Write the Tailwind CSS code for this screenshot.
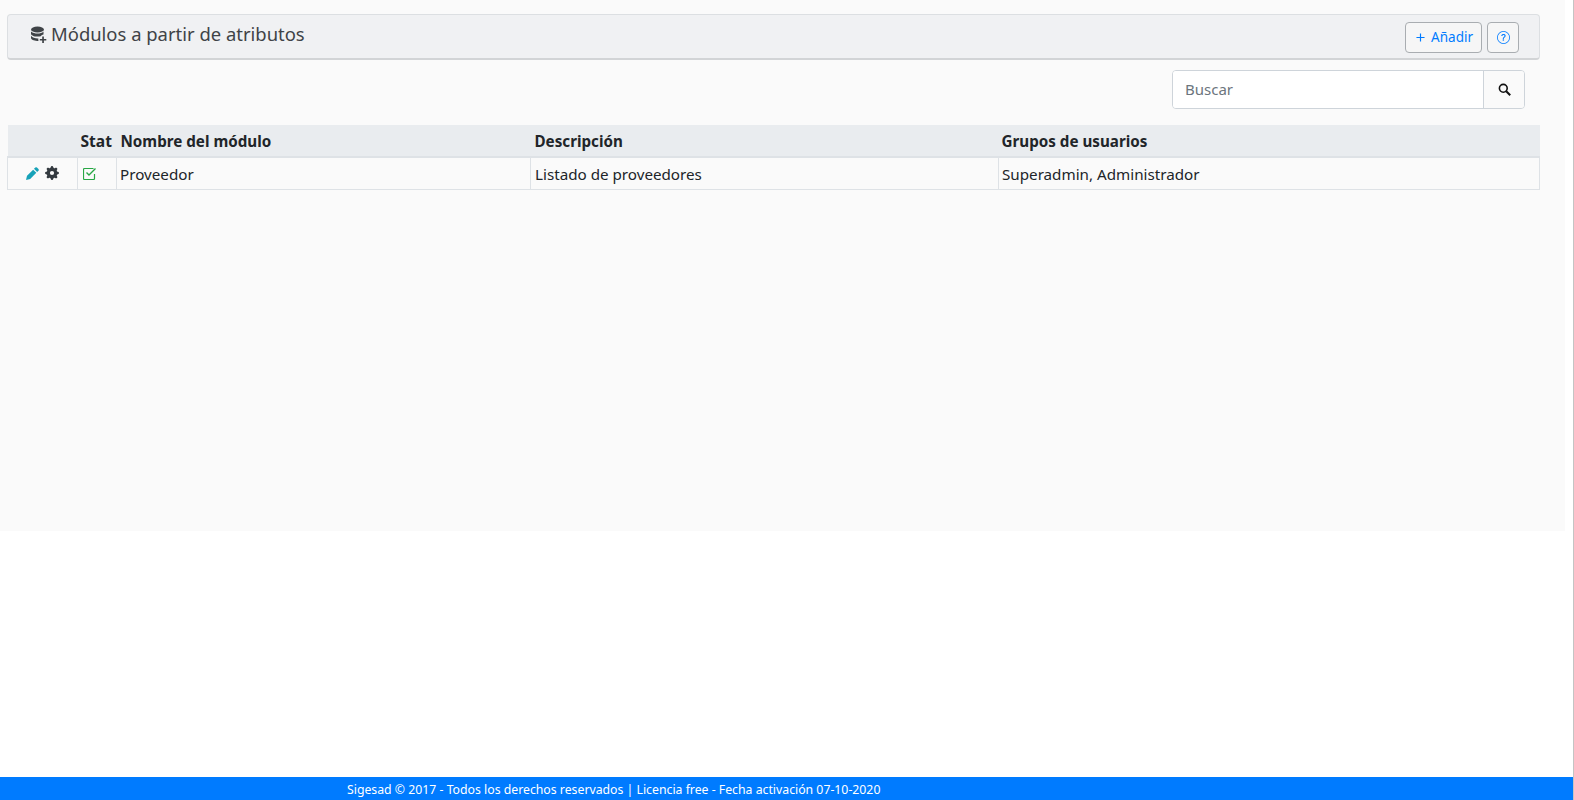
<!DOCTYPE html>
<html lang="es">
<head>
  <meta charset="UTF-8" />
  <title>Módulos a partir de atributos</title>
  <script src="https://cdn.jsdelivr.net/npm/@tailwindcss/browser@4"></script>
</head>
<body class="bg-white font-['Noto_Sans',sans-serif] text-[#212529] overflow-hidden">
  <div class="flex flex-col h-[800px] border-r border-[#c4c4c4]">
    <!-- Contenido -->
    <main class="h-[531px] w-[1565px] bg-[#fafafa] pt-[14px] pl-[7px]">
      <!-- Cabecera -->
      <div class="w-[1533px] h-[46px] flex items-start justify-between bg-[#f0f1f3] border border-[#dcdfe2] border-b-2 border-b-[#d2d4d6] rounded-[4px] pl-[22px] pr-[20px]">
        <h1 class="flex items-center gap-[4px] h-[38px] text-[18.45px] text-[#3f4347]">
          <svg class="w-[17px] h-[17px]" viewBox="0 0 17 17" fill="#3f4347">
            <ellipse cx="7.5" cy="3.5" rx="6.5" ry="3"/>
            <path d="M1 5.500v2.200c0 1.600 2.900 2.900 6.500 2.900 1.200 0 2.300-.15 3.200-.4.7-.9 1.700-1.500 2.800-1.700V5.500c-1.300 1.400-3.600 2.100-6 2.100s-4.700-.7-6.500-2.100z"/>
            <path d="M1 9.800V12c0 1.500 2.700 2.800 6.200 2.900h1.300c-.1-.4-.2-.9-.2-1.300 0-.4 0-.7.1-1.100-3.200.1-5.900-.9-7.400-2.700z"/>
            <path d="M12.200 10.500h1.700v2.400h2.400v1.600h-2.400V17h-1.700v-2.500H9.800v-1.600h2.400z"/>
          </svg>
          Módulos a partir de atributos
        </h1>
        <div class="flex gap-[5px] pt-[7px]">
          <button class="flex items-center gap-[6px] h-[31px] pl-[10px] pr-[8px] bg-[#f6f6f6] border border-[#a9adb1] rounded-[4px] text-[13.5px] text-[#007bff]">
            <svg class="w-[9px] h-[9px]" viewBox="0 0 10 10" stroke="#007bff" stroke-width="1.300" fill="none"><path d="M5 0.500v9M0.500 5h9"/></svg>
            Añadir
          </button>
          <button class="flex items-center justify-center w-[32px] h-[31px] bg-[#f6f6f6] border border-[#a9adb1] rounded-[4px]">
            <svg class="w-[13px] h-[13px]" viewBox="0 0 16 16" fill="#007bff">
              <path d="M8 15A7 7 0 1 1 8 1a7 7 0 0 1 0 14zm0 1A8 8 0 1 0 8 0a8 8 0 0 0 0 16z"/>
              <path d="M5.250 6.030a.240.240 0 0 0 .240.250h.830c.140 0 .250-.110.270-.250.090-.660.540-1.140 1.340-1.140.680 0 1.310.340 1.310 1.170 0 .640-.380.930-.970 1.380-.680.490-1.210 1.060-1.170 1.990v.220c0 .140.110.250.250.250h.810c.140 0 .250-.110.250-.250v-.110c0-.720.270-.930 1.010-1.490.610-.460 1.240-.980 1.240-2.060 0-1.500-1.270-2.230-2.660-2.230-1.260 0-2.640.590-2.750 2.270zm1.550 5.160c0 .530.420.930 1 .930.610 0 1.030-.400 1.030-.930 0-.550-.420-.950-1.030-.950-.580 0-1 .400-1 .950z"/>
            </svg>
          </button>
        </div>
      </div>

      <!-- Buscador -->
      <div class="flex w-[1518px] justify-end mt-[10px]">
        <div class="flex w-[353px] h-[39px] border border-[#ced4da] rounded-[4px] overflow-hidden">
          <input type="text" placeholder="Buscar" class="flex-1 min-w-0 bg-white px-[12px] text-[15px] placeholder:text-[#6c757d]" />
          <button class="flex items-center justify-center w-[41px] bg-[#fafafa] border-l border-[#ced4da]">
            <svg class="w-[13px] h-[13px]" viewBox="0 0 13 13" fill="none" stroke="#111" stroke-width="1.600"><circle cx="5.300" cy="5.300" r="3.900"/><path d="M8.200 8.200l4 4" stroke-width="2"/></svg>
          </button>
        </div>
      </div>

      <!-- Tabla -->
      <table class="w-[1533px] mt-[16px] table-fixed border-collapse text-[15.2px]">
        <thead>
          <tr class="h-[32px] bg-[#e9ecef] border-b-2 border-[#dee2e6] text-left font-bold">
            <th class="w-[70px]"></th>
            <th class="w-[39px] pl-[3px] pt-[2px] font-bold text-[15.6px]">Stat</th>
            <th class="w-[414px] px-[4px] pt-[1px] font-bold">Nombre del módulo</th>
            <th class="w-[468px] px-[4px] pt-[1px] font-bold">Descripción</th>
            <th class="px-[3px] pt-[1px] font-bold">Grupos de usuarios</th>
          </tr>
        </thead>
        <tbody>
          <tr class="h-[32px]">
            <td class="border border-[#dee2e6]">
              <div class="flex items-center justify-center gap-[6px]">
                <svg class="w-[13px] h-[13px]" viewBox="0 0 14 14" fill="#17a2b8"><path d="M10 .6a1.300 1.300 0 0 1 1.800 0l1.600 1.600a1.300 1.300 0 0 1 0 1.800L12 5.400 8.600 2zM7.700 2.900l3.400 3.400-6.600 6.600L0 14l1.100-4.500z"/></svg>
                <svg class="w-[14px] h-[14px]" viewBox="0 0 16 16" fill="#343a40"><path fill-rule="evenodd" d="M9.400 1.100c-.4-1.500-2.400-1.500-2.800 0l-.1.300a1.500 1.500 0 0 1-2.100.9l-.3-.2c-1.300-.8-2.800.7-2 2l.2.300a1.500 1.500 0 0 1-.9 2.100l-.3.100c-1.500.4-1.500 2.400 0 2.800l.3.100a1.500 1.500 0 0 1 .9 2.100l-.2.300c-.8 1.300.7 2.800 2 2l.3-.2a1.500 1.500 0 0 1 2.100.9l.1.300c.4 1.500 2.400 1.500 2.800 0l.1-.3a1.500 1.500 0 0 1 2.100-.9l.3.2c1.300.8 2.800-.7 2-2l-.2-.3a1.500 1.500 0 0 1 .9-2.100l.3-.1c1.500-.4 1.500-2.400 0-2.800l-.3-.1a1.500 1.500 0 0 1-.9-2.100l.2-.3c.8-1.300-.7-2.800-2-2l-.3.2a1.500 1.500 0 0 1-2.100-.9zM8 10.400a2.400 2.400 0 1 1 0-4.800 2.400 2.400 0 0 1 0 4.800z"/></svg>
              </div>
            </td>
            <td class="border border-[#dee2e6] pl-[5px]">
              <svg class="w-[13px] h-[13px]" viewBox="0 0 13 13" fill="none" stroke="#28a745" stroke-width="1.200"><path d="M11.500 7v4.500a1 1 0 0 1-1 1h-9a1 1 0 0 1-1-1v-9a1 1 0 0 1 1-1h9"/><path d="M3.500 5.500L6 8l6.500-6.500" stroke-width="1.400"/></svg>
            </td>
            <td class="border border-[#dee2e6] pl-[3px] pr-[4px] pt-[2px]">Proveedor</td>
            <td class="border border-[#dee2e6] px-[4px] pt-[2px]">Listado de proveedores</td>
            <td class="border border-[#dee2e6] px-[3px] pt-[2px]">Superadmin, Administrador</td>
          </tr>
        </tbody>
      </table>
    </main>

    <div class="flex-1"></div>

    <!-- Pie -->
    <footer class="h-[23px] bg-[#007bff] pl-[347px] text-[12.28px] leading-[26px] text-white">
      Sigesad © 2017 - Todos los derechos reservados | Licencia free - Fecha activación 07-10-2020
    </footer>
  </div>
</body>
</html>
